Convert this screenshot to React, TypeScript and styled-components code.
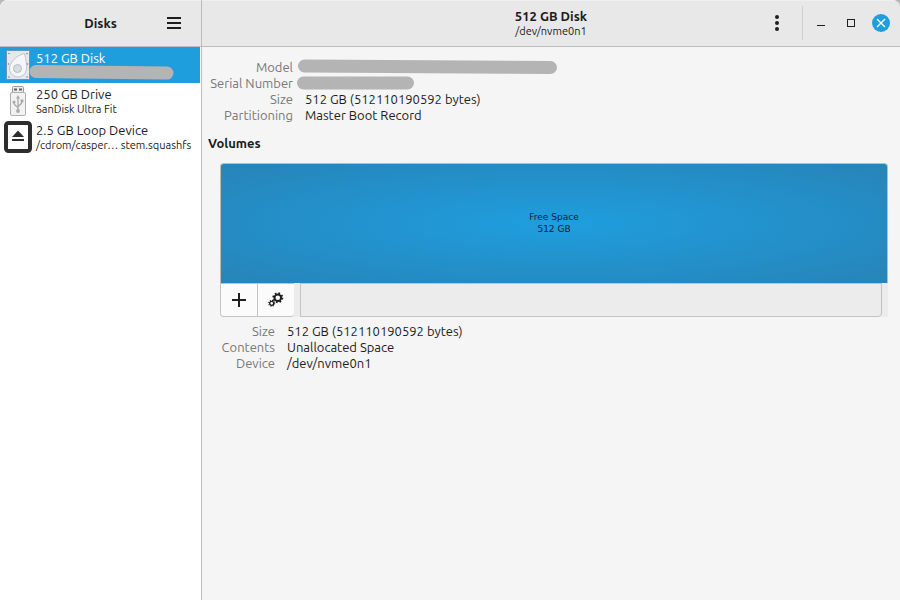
import React from "react";
import styled, { createGlobalStyle, css } from "styled-components";

const GlobalStyle = createGlobalStyle`
  *, *::before, *::after { box-sizing: border-box; }
  body {
    margin: 0;
    background: #b9b9b9;
    color: #1c1c1c;
    font: 13px/16px Ubuntu, "Noto Sans", sans-serif;
  }
  button { font: inherit; color: inherit; }
`;

const Window = styled.div`
  display: flex;
  min-height: 100vh;
  overflow: hidden;
  border-radius: 8px 8px 0 0;
  background: #f5f5f5;
`;

const Sidebar = styled.aside`
  flex: 0 0 202px;
  display: flex;
  flex-direction: column;
  background: #ffffff;
  border-right: 1px solid #bcbcbc;
`;

const Main = styled.main`
  flex: 1;
  min-width: 0;
  display: flex;
  flex-direction: column;
`;

const HeaderBar = styled.header<{ $endPadding: number }>`
  display: grid;
  grid-template-columns: 1fr auto 1fr;
  align-items: center;
  height: 47px;
  background: #e8e8e8;
  border-bottom: 1px solid #bcbcbc;
  box-shadow: inset 0 1px #efefef;

  & > :last-child {
    justify-self: end;
    margin-right: ${(p) => p.$endPadding}px;
  }
`;

const Title = styled.h1`
  grid-column: 2;
  margin: 0;
  font-size: 13px;
  line-height: 16px;
  font-weight: 700;
  text-align: center;
`;

const TitleGroup = styled.div`
  grid-column: 2;
  text-align: center;
`;

const Subtitle = styled.div`
  font-size: 11px;
  line-height: 14px;
`;

const Controls = styled.div`
  display: flex;
  align-items: center;
`;

const IconButton = styled.button<{ $width: number }>`
  display: flex;
  align-items: center;
  justify-content: center;
  width: ${(p) => p.$width}px;
  height: 34px;
  padding: 0;
  border: 0;
  background: transparent;
`;

const Separator = styled.span`
  width: 1px;
  height: 34px;
  margin: 0 3px 0 9px;
  background: #d0d0d0;
`;

const DeviceList = styled.ul`
  margin: 0;
  padding: 0;
  list-style: none;
`;

const DeviceRow = styled.button<{ $selected?: boolean }>`
  position: relative;
  display: flex;
  align-items: center;
  gap: 4px;
  width: calc(100% - 1px);
  height: 36px;
  padding: 0 4px;
  border: 0;
  text-align: left;
  white-space: nowrap;
  background: transparent;
  ${(p) =>
    p.$selected &&
    css`
      background: #1f9ede;
      color: #ffffff;
    `}
`;

const DeviceIcon = styled.svg`
  flex: none;
  width: 28px;
  height: 32px;
`;

const DeviceName = styled.span`
  display: block;
  height: 16px;
`;

const DeviceDetail = styled.span`
  display: block;
  height: 14px;
  font-size: 11px;
  line-height: 14px;
`;

const RowRedaction = styled.svg`
  position: absolute;
  left: 29px;
  top: 18px;
  width: 145px;
  height: 16px;
`;

const Content = styled.div`
  display: flex;
  flex-direction: column;
  padding: 12px 12px 12px 6px;
`;

const Properties = styled.dl<{ $labelWidth: number }>`
  display: grid;
  grid-template-columns: ${(p) => p.$labelWidth}px 1fr;
  grid-auto-rows: 16px;
  column-gap: 12px;
  margin: 0;
  white-space: nowrap;
`;

const Label = styled.dt`
  justify-self: end;
  color: #787878;
`;

const Value = styled.dd`
  margin: 0;
`;

const ValueRedaction = styled.svg`
  display: block;
  height: 16px;
  margin-left: -8px;
`;

const SectionTitle = styled.h2`
  margin: 12px 0;
  font-size: 13px;
  line-height: 16px;
  font-weight: 700;
`;

const Volumes = styled.section`
  display: flex;
  flex-direction: column;
  gap: 6px;
  margin-left: 12px;
`;

const Segment = styled.button`
  display: block;
  width: 100%;
  height: 120px;
  padding: 0 0 2px;
  border: 1px solid #b8bcbf;
  border-bottom: 0;
  border-radius: 4px 4px 0 0;
  background: radial-gradient(ellipse farthest-corner at center, #1f9ede 0%, #2390ca 52%, #2784b7 100%);
  color: #10222d;
  font: 9px/12px "DejaVu Sans", sans-serif;
`;

const Toolbar = styled.div`
  display: flex;
  height: 34px;
  background: #ececec;
  border-radius: 0 0 0 4px;
  padding-right: 6px;
`;

const ButtonGroup = styled.div`
  display: flex;
  border: 1px solid #c3c3c3;
  border-right: 0;
  border-radius: 0 0 4px 4px;
  overflow: hidden;
`;

const ToolButton = styled.button`
  display: flex;
  align-items: center;
  justify-content: center;
  box-sizing: content-box;
  width: 36px;
  padding: 0;
  border: 0;
  background: #fbfbfb;

  & + & {
    border-left: 1px solid #c3c3c3;
  }
`;

const ToolbarSpace = styled.div`
  flex: 1;
  margin-left: 6px;
  border: 1px solid #c3c3c3;
  border-radius: 0 0 4px 0;
`;

function DiskIcon() {
  return (
    <DeviceIcon viewBox="0 0 28 32" aria-hidden="true">
      <rect x="2.5" y="1.5" width="23" height="29" rx="1" fill="#e6e8eb" stroke="#6f93ac" />
      <path d="M20.5 4.5c-3 0-14 6-15 14a8.5 8.5 0 0 0 17 2C23 17 22 10 20.5 4.5Z" fill="#f5f6f8" stroke="#bfc5cc" />
      <circle cx="13.5" cy="19.5" r="4" fill="#d9dde1" stroke="#b5bdc5" />
      <g fill="#7d868f">
        <circle cx="5" cy="4.5" r="0.8" />
        <circle cx="23" cy="4.5" r="0.8" />
        <circle cx="4.5" cy="15" r="0.8" />
        <circle cx="23.5" cy="15" r="0.8" />
        <circle cx="5" cy="28" r="0.8" />
        <circle cx="23" cy="28" r="0.8" />
      </g>
    </DeviceIcon>
  );
}

function UsbIcon() {
  return (
    <DeviceIcon viewBox="0 0 28 32" aria-hidden="true">
      <rect x="8.5" y="1.5" width="11" height="7" rx="1" fill="#ececec" stroke="#9b9b9b" />
      <rect x="10" y="3.5" width="3" height="2" fill="#5e5e5e" />
      <rect x="15" y="3.5" width="3" height="2" fill="#5e5e5e" />
      <rect x="6.5" y="7.5" width="15" height="23" rx="1.5" fill="#f2f2f2" stroke="#b0b0b0" />
      <path d="M14 13v12M14 23.500c0-2.500-4-2-4-6M14 22c0-2 4-2 4-5.500" fill="none" stroke="#a9a9a9" strokeWidth="1.3" />
      <g fill="#a9a9a9">
        <path d="m14 10 2 3.5h-4Z" />
        <circle cx="14" cy="26" r="1.9" />
        <circle cx="10" cy="17" r="1.5" />
        <rect x="16.6" y="14.5" width="2.8" height="2.8" />
      </g>
    </DeviceIcon>
  );
}

function LoopIcon() {
  return (
    <DeviceIcon viewBox="0 0 28 32" aria-hidden="true">
      <rect x="2" y="2" width="24" height="28" rx="2.5" fill="#fff" stroke="#2d2d2d" strokeWidth="4" />
      <path d="M14 9.5 20 16H8Z" fill="#2d2d2d" />
      <rect x="8" y="18" width="12" height="2" fill="#2d2d2d" />
    </DeviceIcon>
  );
}

function GearsIcon() {
  return (
    <svg width="16" height="16" viewBox="0 0 16 16" fill="none" stroke="#1e1e1e" aria-hidden="true">
      <circle cx="9.8" cy="5.7" r="3.3" strokeWidth="2" />
      <circle cx="9.8" cy="5.7" r="4.6" strokeWidth="1.8" strokeDasharray="1.7 1.913" />
      <circle cx="3.7" cy="11.3" r="2" strokeWidth="1.3" />
      <circle cx="3.7" cy="11.3" r="2.9" strokeWidth="1.2" strokeDasharray="1.1 1.178" />
    </svg>
  );
}

export default function App() {
  return (
    <>
      <GlobalStyle />
      <Window>
        <Sidebar>
          <HeaderBar $endPadding={9}>
            <Title>Disks</Title>
            <IconButton $width={36} aria-label="Menu">
              <svg width="14" height="12" aria-hidden="true">
                <path d="M0 1h14M0 6h14M0 11h14" stroke="#1e1e1e" strokeWidth="2" />
              </svg>
            </IconButton>
          </HeaderBar>
          <DeviceList>
            <li>
              <DeviceRow $selected>
                <DiskIcon />
                <span>
                  <DeviceName>512 GB Disk</DeviceName>
                  <DeviceDetail />
                </span>
                <RowRedaction viewBox="0 0 145 16" aria-hidden="true">
                  <path d="M7 6.5 138 8" stroke="#b4b4b4" strokeWidth="13" strokeLinecap="round" />
                </RowRedaction>
              </DeviceRow>
            </li>
            <li>
              <DeviceRow>
                <UsbIcon />
                <span>
                  <DeviceName>250 GB Drive</DeviceName>
                  <DeviceDetail>SanDisk Ultra Fit</DeviceDetail>
                </span>
              </DeviceRow>
            </li>
            <li>
              <DeviceRow>
                <LoopIcon />
                <span>
                  <DeviceName>2.5 GB Loop Device</DeviceName>
                  <DeviceDetail>/cdrom/casper… stem.squashfs</DeviceDetail>
                </span>
              </DeviceRow>
            </li>
          </DeviceList>
        </Sidebar>
        <Main>
          <HeaderBar $endPadding={4}>
            <TitleGroup>
              <Title>512 GB Disk</Title>
              <Subtitle>/dev/nvme0n1</Subtitle>
            </TitleGroup>
            <Controls>
              <IconButton $width={32} aria-label="Disk options">
                <svg width="4" height="16" fill="#1e1e1e" aria-hidden="true">
                  <circle cx="2" cy="2" r="2" />
                  <circle cx="2" cy="8" r="2" />
                  <circle cx="2" cy="14" r="2" />
                </svg>
              </IconButton>
              <Separator />
              <IconButton $width={30} aria-label="Minimize">
                <svg width="8" height="8" aria-hidden="true">
                  <path d="M0 6.5h8" stroke="#1e1e1e" />
                </svg>
              </IconButton>
              <IconButton $width={30} aria-label="Maximize">
                <svg width="8" height="8" aria-hidden="true">
                  <rect x="0.5" y="0.5" width="7" height="7" fill="none" stroke="#1e1e1e" />
                </svg>
              </IconButton>
              <IconButton $width={30} aria-label="Close">
                <svg width="18" height="18" aria-hidden="true">
                  <circle cx="9" cy="9" r="9" fill="#1f9ede" />
                  <path d="m5 5 8 8m0-8-8 8" stroke="#fff" strokeWidth="1.4" />
                </svg>
              </IconButton>
            </Controls>
          </HeaderBar>
          <Content>
            <Properties $labelWidth={85}>
              <Label>Model</Label>
              <Value>
                <ValueRedaction width="261" viewBox="0 0 261 16" aria-hidden="true">
                  <path d="M7.5 7 253.5 8.5" stroke="#b4b4b4" strokeWidth="13" strokeLinecap="round" />
                </ValueRedaction>
              </Value>
              <Label>Serial Number</Label>
              <Value>
                <ValueRedaction width="118" viewBox="0 0 118 16" aria-hidden="true">
                  <path d="M6.5 8h104" stroke="#b4b4b4" strokeWidth="13" strokeLinecap="round" />
                </ValueRedaction>
              </Value>
              <Label>Size</Label>
              <Value>512 GB (512110190592 bytes)</Value>
              <Label>Partitioning</Label>
              <Value>Master Boot Record</Value>
            </Properties>
            <SectionTitle>Volumes</SectionTitle>
            <Volumes>
              <div>
                <Segment>
                  Free Space
                  <br />
                  512 GB
                </Segment>
                <Toolbar>
                  <ButtonGroup>
                    <ToolButton aria-label="Create partition">
                      <svg width="14" height="14" aria-hidden="true">
                        <path d="M7 0v14M0 7h14" stroke="#1e1e1e" strokeWidth="2" />
                      </svg>
                    </ToolButton>
                    <ToolButton aria-label="Partition options">
                      <GearsIcon />
                    </ToolButton>
                  </ButtonGroup>
                  <ToolbarSpace />
                </Toolbar>
              </div>
              <Properties $labelWidth={55}>
                <Label>Size</Label>
                <Value>512 GB (512110190592 bytes)</Value>
                <Label>Contents</Label>
                <Value>Unallocated Space</Value>
                <Label>Device</Label>
                <Value>/dev/nvme0n1</Value>
              </Properties>
            </Volumes>
          </Content>
        </Main>
      </Window>
    </>
  );
}
